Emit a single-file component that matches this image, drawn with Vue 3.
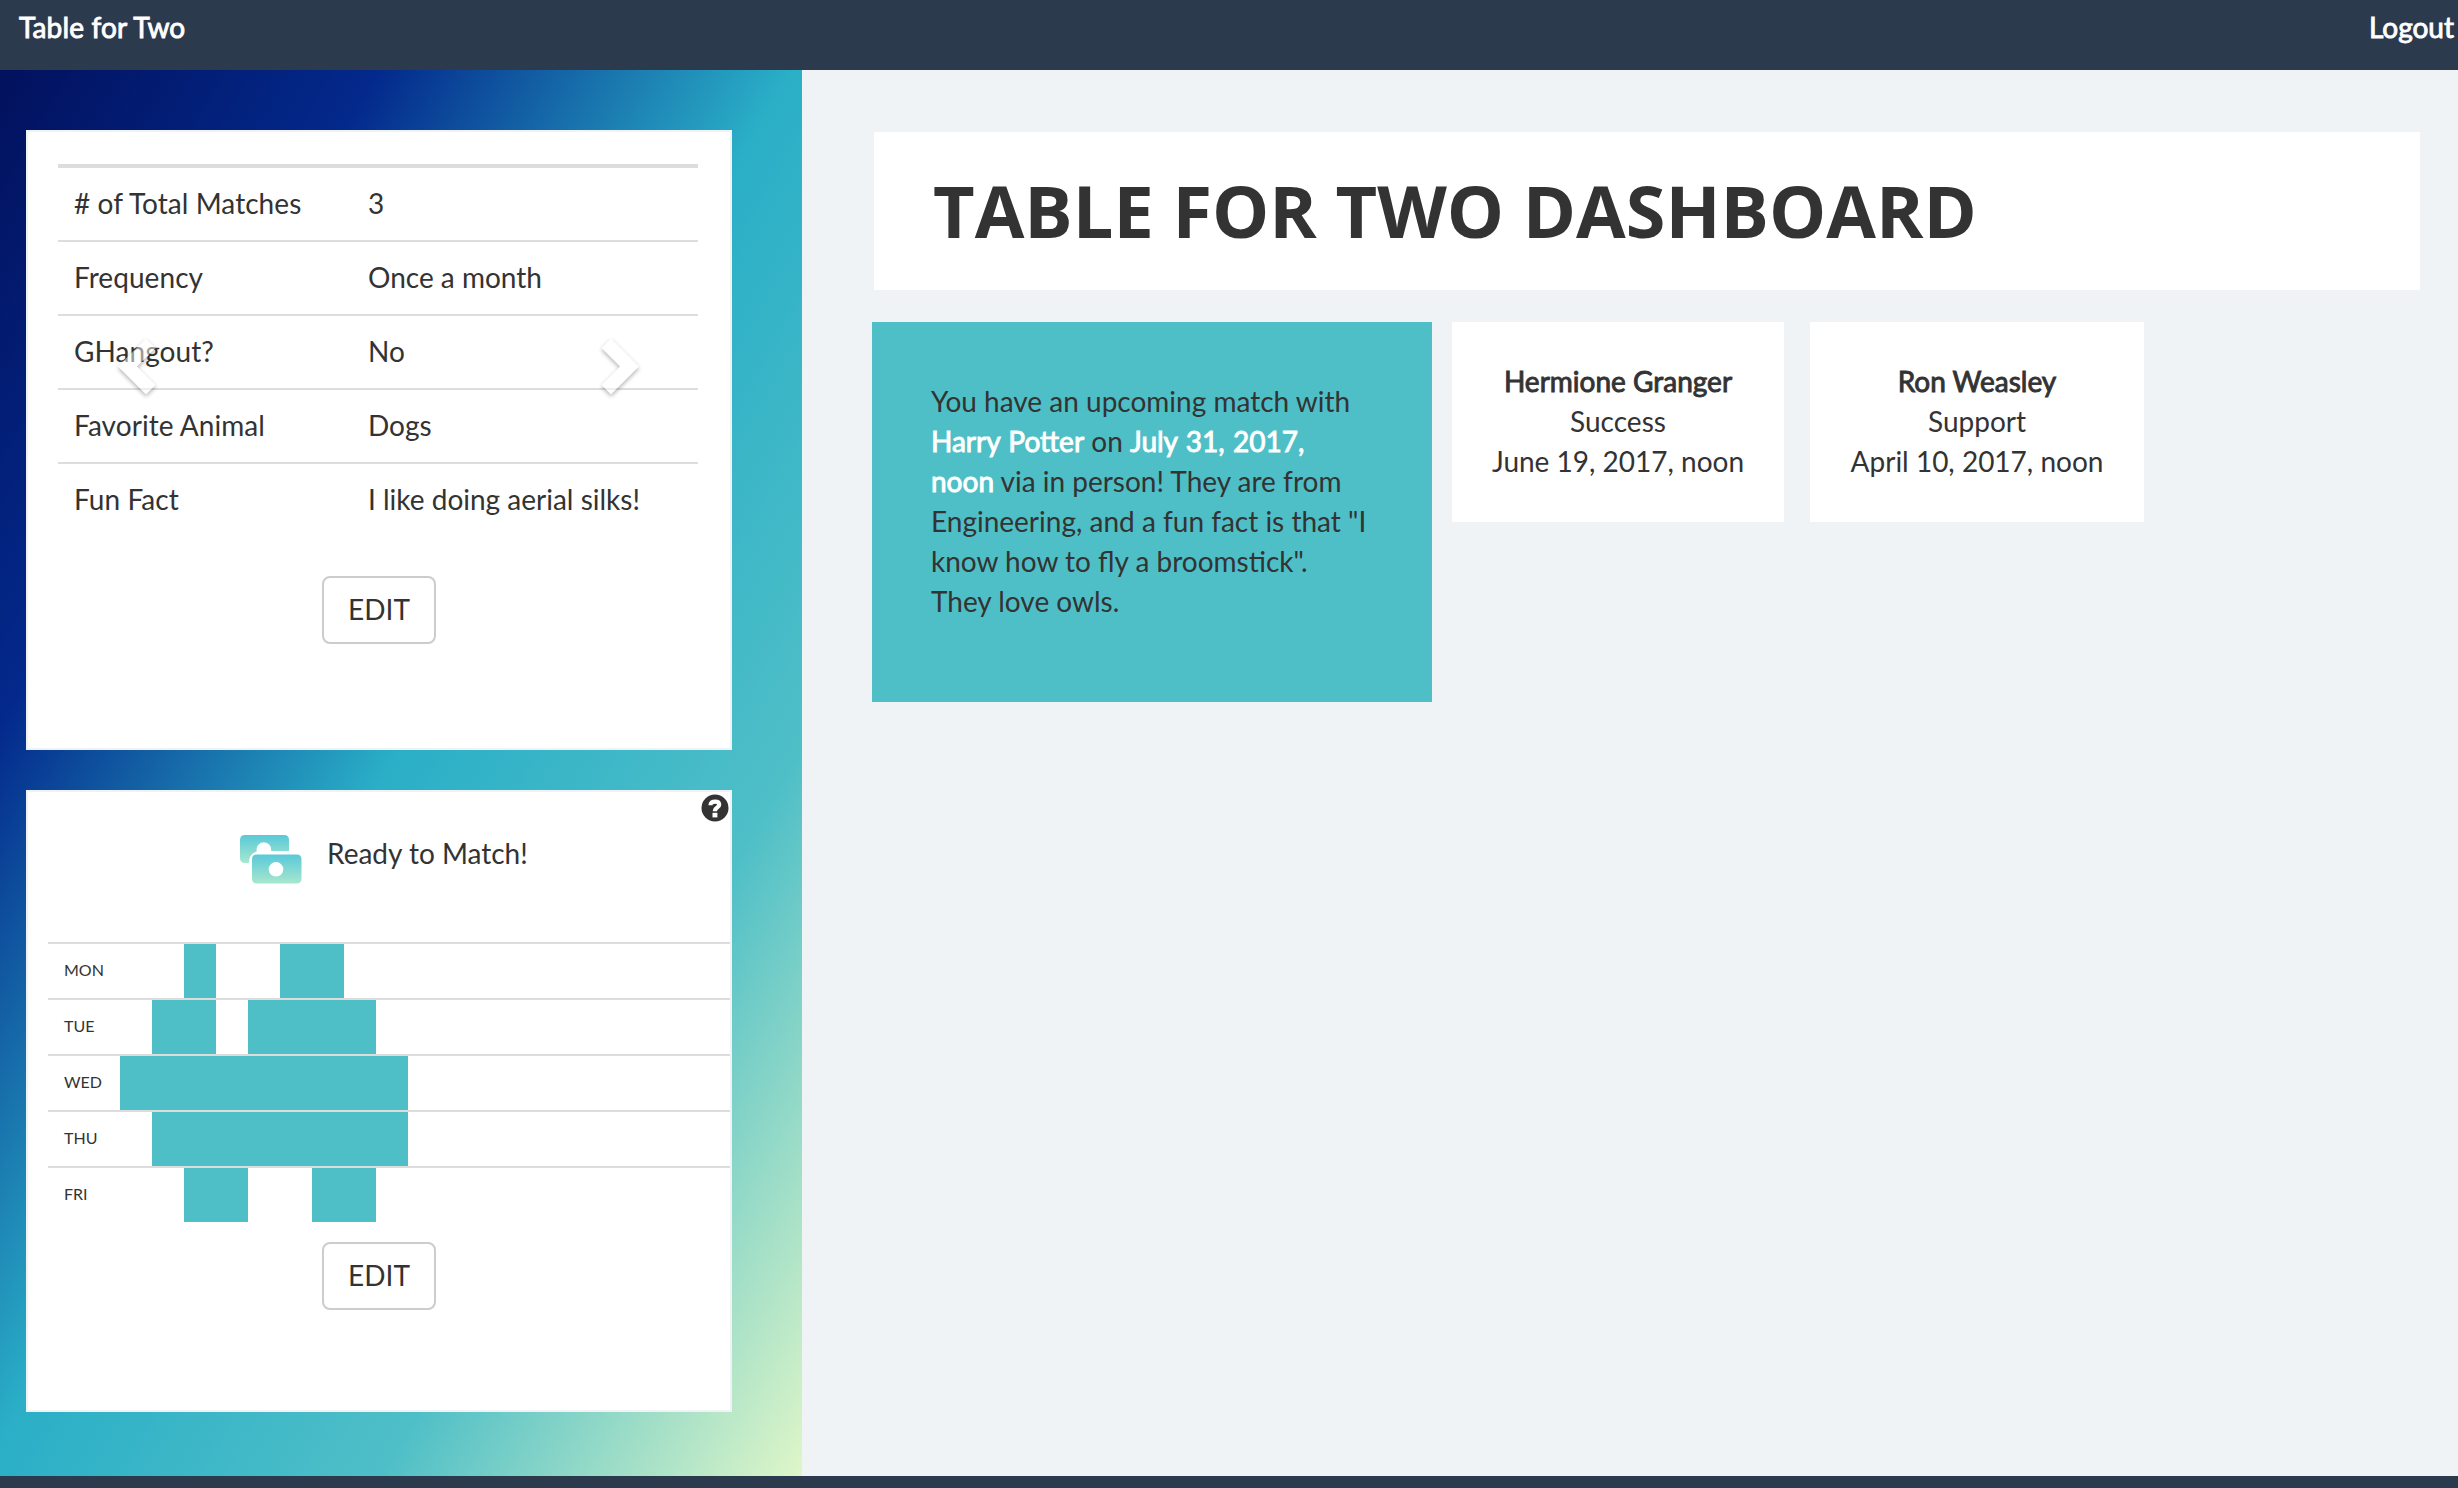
<script setup>
const profile = [
  ['# of Total Matches', '3'],
  ['Frequency', 'Once a month'],
  ['GHangout?', 'No'],
  ['Favorite Animal', 'Dogs'],
  ['Fun Fact', 'I like doing aerial silks!'],
]

// 1 marks an available half-hour slot
const week = [
  { day: 'MON', slots: '001001100' },
  { day: 'TUE', slots: '011011110' },
  { day: 'WED', slots: '111111111' },
  { day: 'THU', slots: '011111111' },
  { day: 'FRI', slots: '001100110' },
]

const pastMatches = [
  { name: 'Hermione Granger', team: 'Success', date: 'June 19, 2017, noon', size: 'first' },
  { name: 'Ron Weasley', team: 'Support', date: 'April 10, 2017, noon', size: 'second' },
]
</script>

<template>
  <div class="page">
    <header class="navbar">
      <a class="strong brand">Table for Two</a>
      <a class="strong logout">Logout</a>
    </header>

    <div class="body">
      <aside class="sidebar">
        <section class="card profile">
          <table class="facts">
            <tbody>
              <tr v-for="[label, value] in profile" :key="label">
                <td class="label">{{ label }}</td>
                <td>{{ value }}</td>
              </tr>
            </tbody>
          </table>
          <button class="btn">EDIT</button>
          <svg class="chevron prev" width="50" height="70" viewBox="0 0 50 70">
            <path d="M35 6.500 L44.500 16 L26 34.500 L44.500 53 L35 62.500 L7 34.500 Z" />
          </svg>
          <svg class="chevron next" width="50" height="70" viewBox="0 0 50 70">
            <path d="M15 6.500 L5.500 16 L24 34.500 L5.500 53 L15 62.500 L43 34.500 Z" />
          </svg>
        </section>

        <section class="card schedule">
          <svg class="help" width="28" height="28" viewBox="0 0 28 28">
            <circle cx="14" cy="14" r="13.500" fill="#333" />
            <path d="M9.500 11.200 C9.500 8.200 11.500 7.700 14.200 7.700 C16.800 7.700 18.200 8.800 18.200 10.800 C18.200 13.600 13.900 13.300 13.900 17.200" fill="none" stroke="#fff" stroke-width="4.200" />
            <rect x="11.500" y="18.800" width="4.900" height="4.600" fill="#fff" />
          </svg>
          <div class="status">
            <svg width="62" height="50" viewBox="0 0 62 50">
              <defs>
                <linearGradient id="note" x1="0" y1="0" x2="0" y2="1">
                  <stop offset="0" stop-color="#59c9d8" />
                  <stop offset="1" stop-color="#a8e7cf" />
                </linearGradient>
              </defs>
              <path fill="url(#note)" d="M5 0 H44 Q49 0 49 5 V16 H31 A7.300 7.300 0 1 0 16.800 16.500 Q9.500 18 8.800 28 H5 Q0 28 0 23 V5 Q0 0 5 0 Z" />
              <path fill="url(#note)" fill-rule="evenodd" d="M17 19.500 H56.500 Q61.500 19.500 61.500 24.500 V43.500 Q61.500 48.500 56.500 48.500 H17 Q12 48.500 12 43.500 V24.500 Q12 19.500 17 19.500 Z M36 27 A7.300 7.300 0 1 0 36 41.600 A7.300 7.300 0 1 0 36 27 Z" />
            </svg>
            <span>Ready to Match!</span>
          </div>
          <div class="week">
            <div v-for="row in week" :key="row.day" class="row">
              <span class="day">{{ row.day }}</span>
              <i v-for="(slot, n) in row.slots" :key="n" class="slot" :class="{ open: slot === '1' }" />
            </div>
          </div>
          <button class="btn">EDIT</button>
        </section>
      </aside>

      <main class="content">
        <div class="title"><h1>TABLE FOR TWO DASHBOARD</h1></div>
        <div class="matches">
          <p class="upcoming">
            You have an upcoming match with <b>Harry Potter</b> on <b>July 31, 2017, noon</b> via in person! They are from Engineering, and a fun fact is that "I know how to fly a broomstick". They love owls.
          </p>
          <div v-for="m in pastMatches" :key="m.name" class="past" :class="m.size">
            <div class="strong">{{ m.name }}</div>
            <div>{{ m.team }}</div>
            <div>{{ m.date }}</div>
          </div>
        </div>
      </main>
    </div>
    <footer class="footer"></footer>
  </div>
</template>

<style>
body {
  margin: 0;
  overflow: hidden;
}
</style>

<style scoped>
.page {
  display: flex;
  flex-direction: column;
  width: 2458px;
  height: 1488px;
  overflow: hidden;
  background: #eff3f6;
  color: #333;
  font: 400 28px/40px Lato, sans-serif;
}
.page * {
  box-sizing: border-box;
}
.navbar {
  display: flex;
  justify-content: space-between;
  height: 70px;
  padding: 7px 4px 0 19px;
  background: #2c3a4d;
  color: #fff;
}
.strong,
b {
  font-weight: 400;
  -webkit-text-stroke: 0.9px currentColor;
}
.brand {
  letter-spacing: 0.15px;
}
.body {
  display: flex;
  height: 1406px;
}
.footer {
  height: 12px;
  background: #2c3a4d;
}
.sidebar {
  display: flex;
  flex-direction: column;
  gap: 40px;
  width: 802px;
  padding: 60px 70px 0 26px;
  background: linear-gradient(120deg, #02115d 0%, #03298c 23.5%, #2aafc7 49%, #4fbfc7 74%, #dff6c8 100%);
}
.card {
  position: relative;
  display: flex;
  flex-direction: column;
  align-items: center;
  background: #fff;
  border: 2px solid #eff3f6;
}
.profile {
  height: 620px;
  padding: 32px 30px 0;
}
.facts {
  align-self: flex-start;
  width: 640px;
  border-collapse: separate;
  border-spacing: 0;
  border-top: 2px solid #ddd;
  table-layout: fixed;
}
.facts td {
  padding: 15px 16px 17px;
  border-top: 2px solid #ddd;
}
.facts .label {
  width: 294px;
  letter-spacing: 0.06px;
}
.btn {
  width: 114px;
  height: 68px;
  padding: 0 0 2px;
  border: 2px solid #ccc;
  border-radius: 8px;
  background: #fff;
  color: #333;
  font: inherit;
}
.profile .btn {
  margin-top: 40px;
}
.chevron {
  position: absolute;
  top: 200px;
  fill: #fff;
  opacity: 0.5;
  filter: drop-shadow(0 2px 2px rgba(0, 0, 0, 0.6));
}
.prev {
  left: 83px;
}
.next {
  left: 568px;
}
.schedule {
  height: 622px;
}
.help {
  position: absolute;
  top: 2px;
  right: 1px;
}
.status {
  display: flex;
  align-items: flex-start;
  gap: 25px;
  align-self: flex-start;
  height: 150px;
  padding: 43px 0 0 212px;
}
.status span {
  margin-top: -2px;
}
.week {
  align-self: flex-end;
  width: 682px;
}
.row {
  display: flex;
  height: 56px;
  border-top: 2px solid #ddd;
}
.day {
  width: 72px;
  padding-left: 16px;
  font-size: 16px;
  line-height: 51px;
}
.slot {
  width: 32px;
}
.open {
  background: #4fbfc7;
}
.schedule .btn {
  margin-top: 20px;
}
.content {
  flex: 1;
  padding: 62px 38px 0 70px;
}
.title {
  height: 158px;
  margin-left: 2px;
  padding: 28px 0 0 59px;
  background: #fff;
}
h1 {
  margin: 0;
  font: 700 72px/100px "Open Sans", sans-serif;
}
.matches {
  display: flex;
  align-items: flex-start;
  margin-top: 32px;
}
.upcoming {
  width: 560px;
  height: 380px;
  margin: 0 20px 0 0;
  padding: 59px 62px 0 59px;
  background: #4fbfc7;
}
b {
  color: #fff;
  word-spacing: 1.2px;
}
.past {
  height: 200px;
  padding-top: 39px;
  background: #fff;
  text-align: center;
}
.first {
  width: 332px;
}
.second {
  width: 334px;
  margin-left: 26px;
}
</style>
